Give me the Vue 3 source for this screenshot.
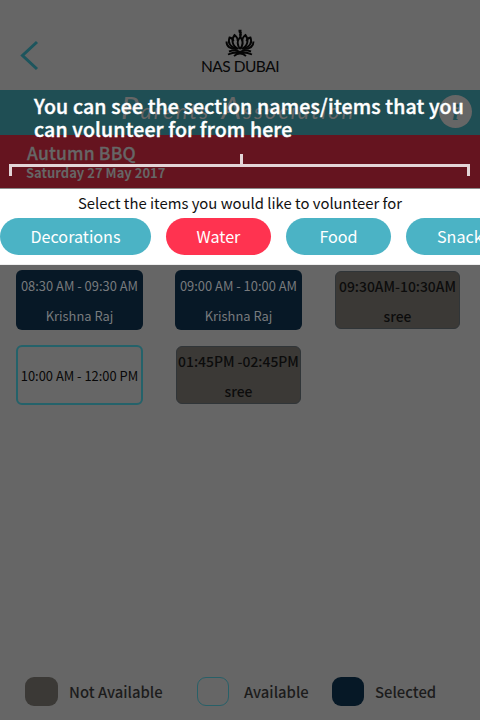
<script setup>
const items = [
  { name: 'Decorations', size: 'wide' },
  { name: 'Water', active: true },
  { name: 'Food' },
  { name: 'Snacks', size: 'fit' }
]
const slots = [
  { time: '08:30 AM - 09:30 AM', name: 'Krishna Raj', state: 'selected' },
  { time: '09:00 AM - 10:00 AM', name: 'Krishna Raj', state: 'selected' },
  { time: '09:30AM-10:30AM', name: 'sree', state: 'taken' },
  { time: '10:00 AM - 12:00 PM', name: '', state: 'open' },
  { time: '01:45PM -02:45PM', name: 'sree', state: 'taken' }
]
</script>

<template>
  <main class="screen">
    <header class="top">
      <svg class="back" width="20" height="32" viewBox="0 0 20 32"><path d="M17 3 2.500 16.500 17 30" /></svg>
      <div class="brand">
        <svg class="crest" width="32" height="28" viewBox="0 0 32 28">
          <path d="M16 20C12.500 15 13 12 15.500 9C17.500 6.500 17.500 4 15 2.500M16 20C19.500 16 19 12 17 9C15.500 6 16 4 17.500 3M14.500 1.700H17.500" />
          <path d="M14.500 20C8 17 7 11 10.500 6C13 8 14 10 13.500 12M17.500 20C24 17 25 11 21.500 6C19 8 18 10 18.500 12" />
          <path d="M13.500 20C6 18 3.500 14 5.500 8.500C8 9 9 10 9.500 12M18.500 20C26 18 28.500 14 26.500 8.500C24 9 23 10 22.500 12" />
          <path d="M12.500 20C6 20 2.500 17.500 2.500 12.500M19.500 20C26 20 29.500 17.500 29.500 12.500" />
          <path d="M5 22.500Q12 20 16 23Q20 20 27 22.500M4 25.500Q11 22.500 16 24Q21 22.500 28 25.500M10 27Q16 22 22 27" />
        </svg>
        <span class="brand-name">NAS DUBAI</span>
      </div>
    </header>

    <section class="association">
      <span class="script"><b>P</b>arents <b>A</b>ssociation</span>
      <span class="info">i</span>
    </section>

    <section class="event">
      <h1>Autumn BBQ</h1>
      <p>Saturday 27 May 2017</p>
    </section>

    <section class="picker">
      <p>Select the items you would like to volunteer for</p>
      <div class="pills">
        <button v-for="item in items" :key="item.name" :class="['pill', item.size, { active: item.active }]">{{ item.name }}</button>
      </div>
    </section>

    <section class="slots">
      <div v-for="slot in slots" :key="slot.time" :class="['slot', slot.state]">
        <span>{{ slot.time }}</span>
        <span v-if="slot.name">{{ slot.name }}</span>
      </div>
    </section>

    <footer class="legend">
      <i class="swatch na"></i><span class="l1">Not Available</span>
      <i class="swatch av"></i><span class="l2">Available</span>
      <i class="swatch se"></i><span class="l3">Selected</span>
    </footer>

    <div class="hint">
      <p>You can see the section names/items that you<br>can volunteer for from here</p>
      <svg width="462" height="24" viewBox="0 0 462 24"><path d="M1.500 22V11.500H459.500V22M232.500 0V12" /></svg>
    </div>
  </main>
</template>

<style>
body { margin: 0; background: #666; }
</style>

<style scoped>
* { box-sizing: border-box; }
p, h1 { margin: 0; }
.screen { position: relative; width: 480px; height: 720px; overflow: hidden; display: flex; flex-direction: column; background: #666; font-family: "Noto Sans CJK SC", "Noto Sans", sans-serif; white-space: nowrap; }
.top { height: 90px; flex: none; display: grid; grid-template-columns: 180px 120px 180px; }
.back { margin: 39px 0 0 20px; fill: none; stroke: #1d555d; stroke-width: 3; }
.brand { display: flex; flex-direction: column; align-items: center; padding-top: 29px; }
.crest { fill: none; stroke: #050505; stroke-width: 1.9; }
.brand-name { font-family: Lato, sans-serif; font-size: 15.500px; line-height: 18px; letter-spacing: -0.5px; color: #080808; }
.association { height: 45px; flex: none; background: #1f4e54; color: #666; display: flex; justify-content: space-between; padding: 5px 8px 0 121px; }
.script { font-family: Lato, cursive; font-style: italic; font-weight: 400; font-size: 22px; line-height: 32px; letter-spacing: 2.1px; word-spacing: 4px; }
.script b { font-weight: 400; font-size: 31px; line-height: 20px; }
.info { width: 33px; height: 33px; border-radius: 50%; background: #666; color: #1f4e54; font: italic bold 24px/34px "Liberation Serif", serif; text-align: center; }
.event { height: 53px; flex: none; background: #65141f; color: #666; padding: 6px 26px 0; }
.event h1 { margin-left: 1px; font-size: 17.500px; line-height: 24px; font-weight: 500; letter-spacing: 0.150px; -webkit-text-stroke: 0.3px #666; }
.event p { margin-top: 0; font-size: 13px; line-height: 15px; font-weight: 700; }
.picker { height: 77px; flex: none; background: #fff; border-top: 1px solid #8c8c8c; border-bottom: 1px solid #eee; }
.picker p { text-align: center; font-size: 14.850px; line-height: 27px; height: 28px; color: #111; }
.pills { display: flex; gap: 15px; }
.pill { flex: none; width: 105px; height: 37px; margin: 1px 0 0; border: 0; padding: 0 0 1px; border-radius: 19px; background: #4bb3c5; color: #fff; font: 16.150px/35px "Noto Sans CJK SC", sans-serif; }
.pill.wide { width: 151px; }
.pill.fit { width: auto; padding: 0 31px 1px; }
.pill.active { background: #ff3350; }
.slots { flex: 1; display: grid; grid-template-columns: repeat(3, 127px); grid-auto-rows: 60px; column-gap: 32px; row-gap: 15px; padding: 5px 16px; }
.slot { border-radius: 6px; display: flex; flex-direction: column; align-items: center; justify-content: center; padding-top: 1px; font-size: 12.900px; line-height: 30px; }
.selected { background: #071826; color: #777a7d; }
.open { border: 2px solid #24626a; color: #080808; }
.taken { margin: 1px; background: #3b3936; border: 1px solid #303538; color: #0c0c0c; font-size: 13.900px; font-weight: 500; }
.legend { height: 58px; flex: none; display: flex; align-items: flex-start; padding: 15px 0 0 25px; color: #1c1c1c; font-size: 14.850px; line-height: 29px; font-weight: 500; }
.swatch { flex: none; width: 32px; height: 29px; border-radius: 9px; }
.na { width: 33px; background: #3b3936; }
.av { border: 1px solid #286068; }
.se { background: #061826; }
.l1 { margin-left: 11px; width: 128px; }
.l2 { margin-left: 15px; width: 88px; }
.l3 { margin-left: 11px; }
.hint { position: absolute; left: 9px; top: 94px; color: #fff; }
.hint p { margin-left: 25px; font-size: 19.500px; line-height: 23px; font-weight: 500; letter-spacing: 0.160px; -webkit-text-stroke: 0.4px #fff; }
.hint svg { display: block; margin-top: 14px; fill: none; stroke: #e3d5d7; stroke-width: 3; }
</style>
